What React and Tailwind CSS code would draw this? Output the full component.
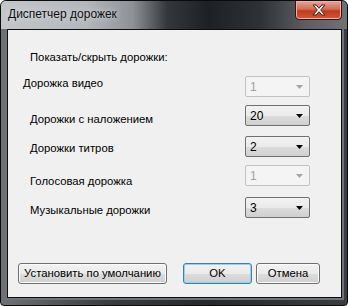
import React from 'react';

const font = { fontFamily: '"Liberation Sans", Arial, sans-serif' };

const rows = [
  { label: 'Дорожка видео', value: '1', disabled: true, pl: 'pl-[15px]', lt: 'mt-0', mt: 'mt-[12px]' },
  { label: 'Дорожки с наложением', value: '20', pl: 'pl-[22px]', lt: 'mt-[7px]', mt: 'mt-[8px]' },
  { label: 'Дорожки титров', value: '2', pl: 'pl-[22px]', lt: 'mt-[5px]', mt: 'mt-[10px]' },
  { label: 'Голосовая дорожка', value: '1', disabled: true, pl: 'pl-[22px]', lt: 'mt-[9px]', mt: 'mt-[8px]' },
  { label: 'Музыкальные дорожки', value: '3', pl: 'pl-[22px]', lt: 'mt-[6px]', mt: 'mt-[11px]' },
];

const Combo = ({ value, disabled }) => (
  <div
    className={`flex items-center justify-between w-[65px] h-[21px] rounded-[2px] border pl-[4px] pr-[6px] text-[12px] leading-none ${
      disabled
        ? 'border-[#c2c2c2] bg-[#f4f4f4] text-[#a0a0a0]'
        : 'border-[#707070] bg-[linear-gradient(#f2f2f2_0%,#ebebeb_50%,#dddddd_51%,#cfcfcf_100%)] text-black'
    }`}
  >
    <span>{value}</span>
    <svg width="7" height="4" viewBox="0 0 7 4">
      <path d="M0 0h7L3.5 4z" fill={disabled ? '#a6a6a6' : '#000'} />
    </svg>
  </div>
);

const Button = ({ children, width, primary }) => (
  <button
    className={`${width} h-[21px] rounded-[3px] border text-[11.3px] leading-none text-black bg-[linear-gradient(#f2f2f2_0%,#ebebeb_50%,#dddddd_51%,#cfcfcf_100%)] ${
      primary
        ? 'border-[#3c7fb1] shadow-[inset_0_0_0_1px_#8fd3f5]'
        : 'border-[#707070] shadow-[inset_0_0_0_1px_#fbfbfb]'
    }`}
  >
    {children}
  </button>
);

export default function App() {
  return (
    <div className="w-[348px] h-[306px] bg-white" style={font}>
      <div className="flex flex-col w-full h-full rounded-t-[6px] rounded-b-[4px] border border-[#0b0b0b] bg-[linear-gradient(90deg,#6e7276_0%,#3a3e42_30%,#25282c_60%,#3a3d41_100%)] overflow-hidden">
        {/* Title bar */}
        <div className="relative h-[28px] shrink-0 bg-[linear-gradient(90deg,#c4c7ca_0%,#b3b6ba_25%,#8e9296_38%,#34383c_48%,#1d2024_60%,#2e3236_75%,#5b5f63_88%,#6e7276_100%)]">
          <div className="absolute left-[7px] top-[7px] text-[12px] leading-none text-[#111] [text-shadow:0_0_6px_#e6e8ea]">
            Диспетчер дорожек
          </div>
          <div className="absolute right-[5px] top-[-1px] w-[47px] h-[20px] rounded-b-[4px] border border-[#3d1009] bg-[linear-gradient(#e7a697_0%,#d36d57_45%,#c2391f_55%,#cf5a3a_100%)] shadow-[inset_0_0_0_1px_#f0b3a3] flex items-center justify-center">
            <svg width="14" height="12" viewBox="0 0 14 12">
              <path
                d="M1 1h3.2L7 4.3 9.8 1H13L8.7 6 13 11H9.8L7 7.7 4.2 11H1l4.3-5z"
                fill="#fff"
                stroke="#4a1a10"
                strokeWidth="1"
              />
            </svg>
          </div>
        </div>

        {/* Client area */}
        <div className="flex-1 ml-[6px] mr-[5px] mb-[7px] border border-[#0e0e0e] shadow-[0_0_0_2px_#707377] bg-[#f0f0f0] text-[11.3px] leading-[14px] text-black flex flex-col">
          <div className="pl-[22px] mt-[20px]">Показать/скрыть дорожки:</div>

          {rows.map((r, i) => (
            <div key={i} className={`flex items-start h-[21px] ${r.mt}`}>
              <div className={`flex-1 ${r.pl} ${r.lt}`}>{r.label}</div>
              <div className="mr-[31px]">
                <Combo value={r.value} disabled={r.disabled} />
              </div>
            </div>
          ))}

          <div className="flex items-center mt-auto mb-[13px] pl-[10px]">
            <Button width="w-[149px]">Установить по умолчанию</Button>
            <div className="ml-[16px] flex gap-[4px]">
              <Button width="w-[69px]" primary>
                OK
              </Button>
              <Button width="w-[64px]">Отмена</Button>
            </div>
          </div>
        </div>
      </div>
    </div>
  );
}
